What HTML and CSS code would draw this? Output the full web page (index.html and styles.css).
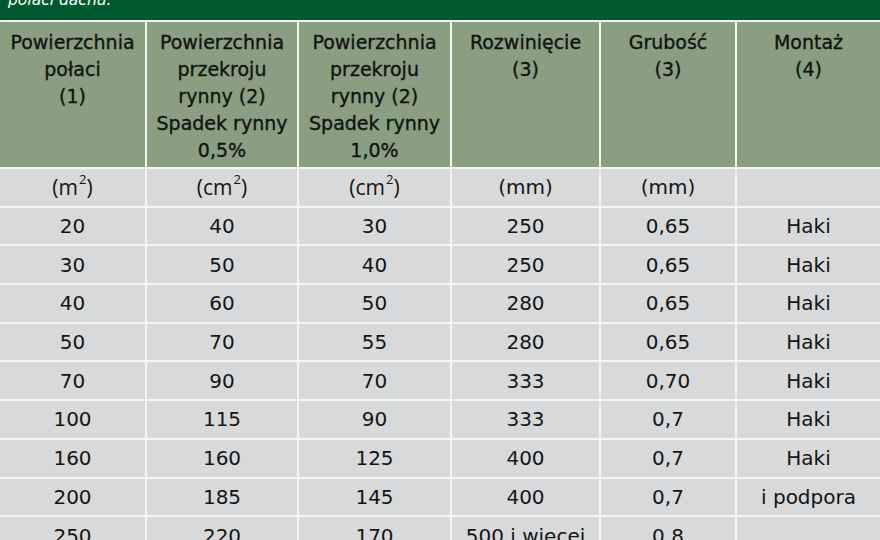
FILE: index.html
```html
<!DOCTYPE html>
<html lang="pl">
<head>
<meta charset="utf-8">
<title>Tabela rynien</title>
<link rel="stylesheet" href="styles.css">
</head>
<body>
<div class="page">
  <div class="caption"><p class="caption-text">połaci dachu.</p></div>
  <div class="table">
    <div class="th">Powierzchnia<br>połaci<br>(1)</div>
    <div class="th">Powierzchnia<br>przekroju<br>rynny (2)<br>Spadek rynny<br>0,5%</div>
    <div class="th">Powierzchnia<br>przekroju<br>rynny (2)<br>Spadek rynny<br>1,0%</div>
    <div class="th">Rozwinięcie<br>(3)</div>
    <div class="th">Grubość<br>(3)</div>
    <div class="th">Montaż<br>(4)</div>

    <div class="td unit">(m<span class="sq">2</span>)</div>
    <div class="td unit">(cm<span class="sq">2</span>)</div>
    <div class="td unit">(cm<span class="sq">2</span>)</div>
    <div class="td">(mm)</div>
    <div class="td">(mm)</div>
    <div class="td"></div>

    <div class="td">20</div><div class="td">40</div><div class="td">30</div><div class="td">250</div><div class="td">0,65</div><div class="td">Haki</div>
    <div class="td">30</div><div class="td">50</div><div class="td">40</div><div class="td">250</div><div class="td">0,65</div><div class="td">Haki</div>
    <div class="td">40</div><div class="td">60</div><div class="td">50</div><div class="td">280</div><div class="td">0,65</div><div class="td">Haki</div>
    <div class="td">50</div><div class="td">70</div><div class="td">55</div><div class="td">280</div><div class="td">0,65</div><div class="td">Haki</div>
    <div class="td">70</div><div class="td">90</div><div class="td">70</div><div class="td">333</div><div class="td">0,70</div><div class="td">Haki</div>
    <div class="td">100</div><div class="td">115</div><div class="td">90</div><div class="td">333</div><div class="td">0,7</div><div class="td">Haki</div>
    <div class="td">160</div><div class="td">160</div><div class="td">125</div><div class="td">400</div><div class="td">0,7</div><div class="td">Haki</div>
    <div class="td">200</div><div class="td">185</div><div class="td">145</div><div class="td">400</div><div class="td">0,7</div><div class="td">i podpora</div>
    <div class="td">250</div><div class="td">220</div><div class="td">170</div><div class="td">500 i więcej</div><div class="td">0,8</div><div class="td"></div>
  </div>
</div>
</body>
</html>
```

FILE: styles.css
```css
html, body {
  margin: 0;
  padding: 0;
  background: #f3f6f1;
}

body {
  width: 880px;
  height: 540px;
  overflow: hidden;
  font-family: "DejaVu Sans", "Liberation Sans", sans-serif;
  color: #161816;
}

.page {
  display: flex;
  flex-direction: column;
  gap: 2px;
  background: #eef3ec;
}

.caption {
  height: 20px;
  background: #005a2d;
  overflow: hidden;
}

.caption-text {
  margin: -9px 0 0 8px;
  font-size: 15.5px;
  line-height: 18px;
  font-style: italic;
  color: #ffffff;
}

.table {
  display: grid;
  grid-template-columns: 145px 150px 151px 147px 134px 143px;
  grid-template-rows: 145px;
  grid-auto-rows: 36.7px;
  gap: 2px;
  background: #f4f6f3;
}

.th {
  background: #8a9f82;
  text-align: center;
  font-size: 19px;
  line-height: 27px;
  padding-top: 7px;
  color: #101410;
  -webkit-text-stroke: 0.35px #101410;
}

.td {
  background: #d8d9db;
  display: flex;
  align-items: center;
  justify-content: center;
  font-size: 20px;
  white-space: nowrap;
  color: #141514;
}

.unit {
  font-family: "Open Sans", "DejaVu Sans", sans-serif;
  font-size: 21px;
}

.sq {
  font-size: 13px;
  line-height: 1;
  position: relative;
  top: -8px;
  margin-left: 1px;
}
```
